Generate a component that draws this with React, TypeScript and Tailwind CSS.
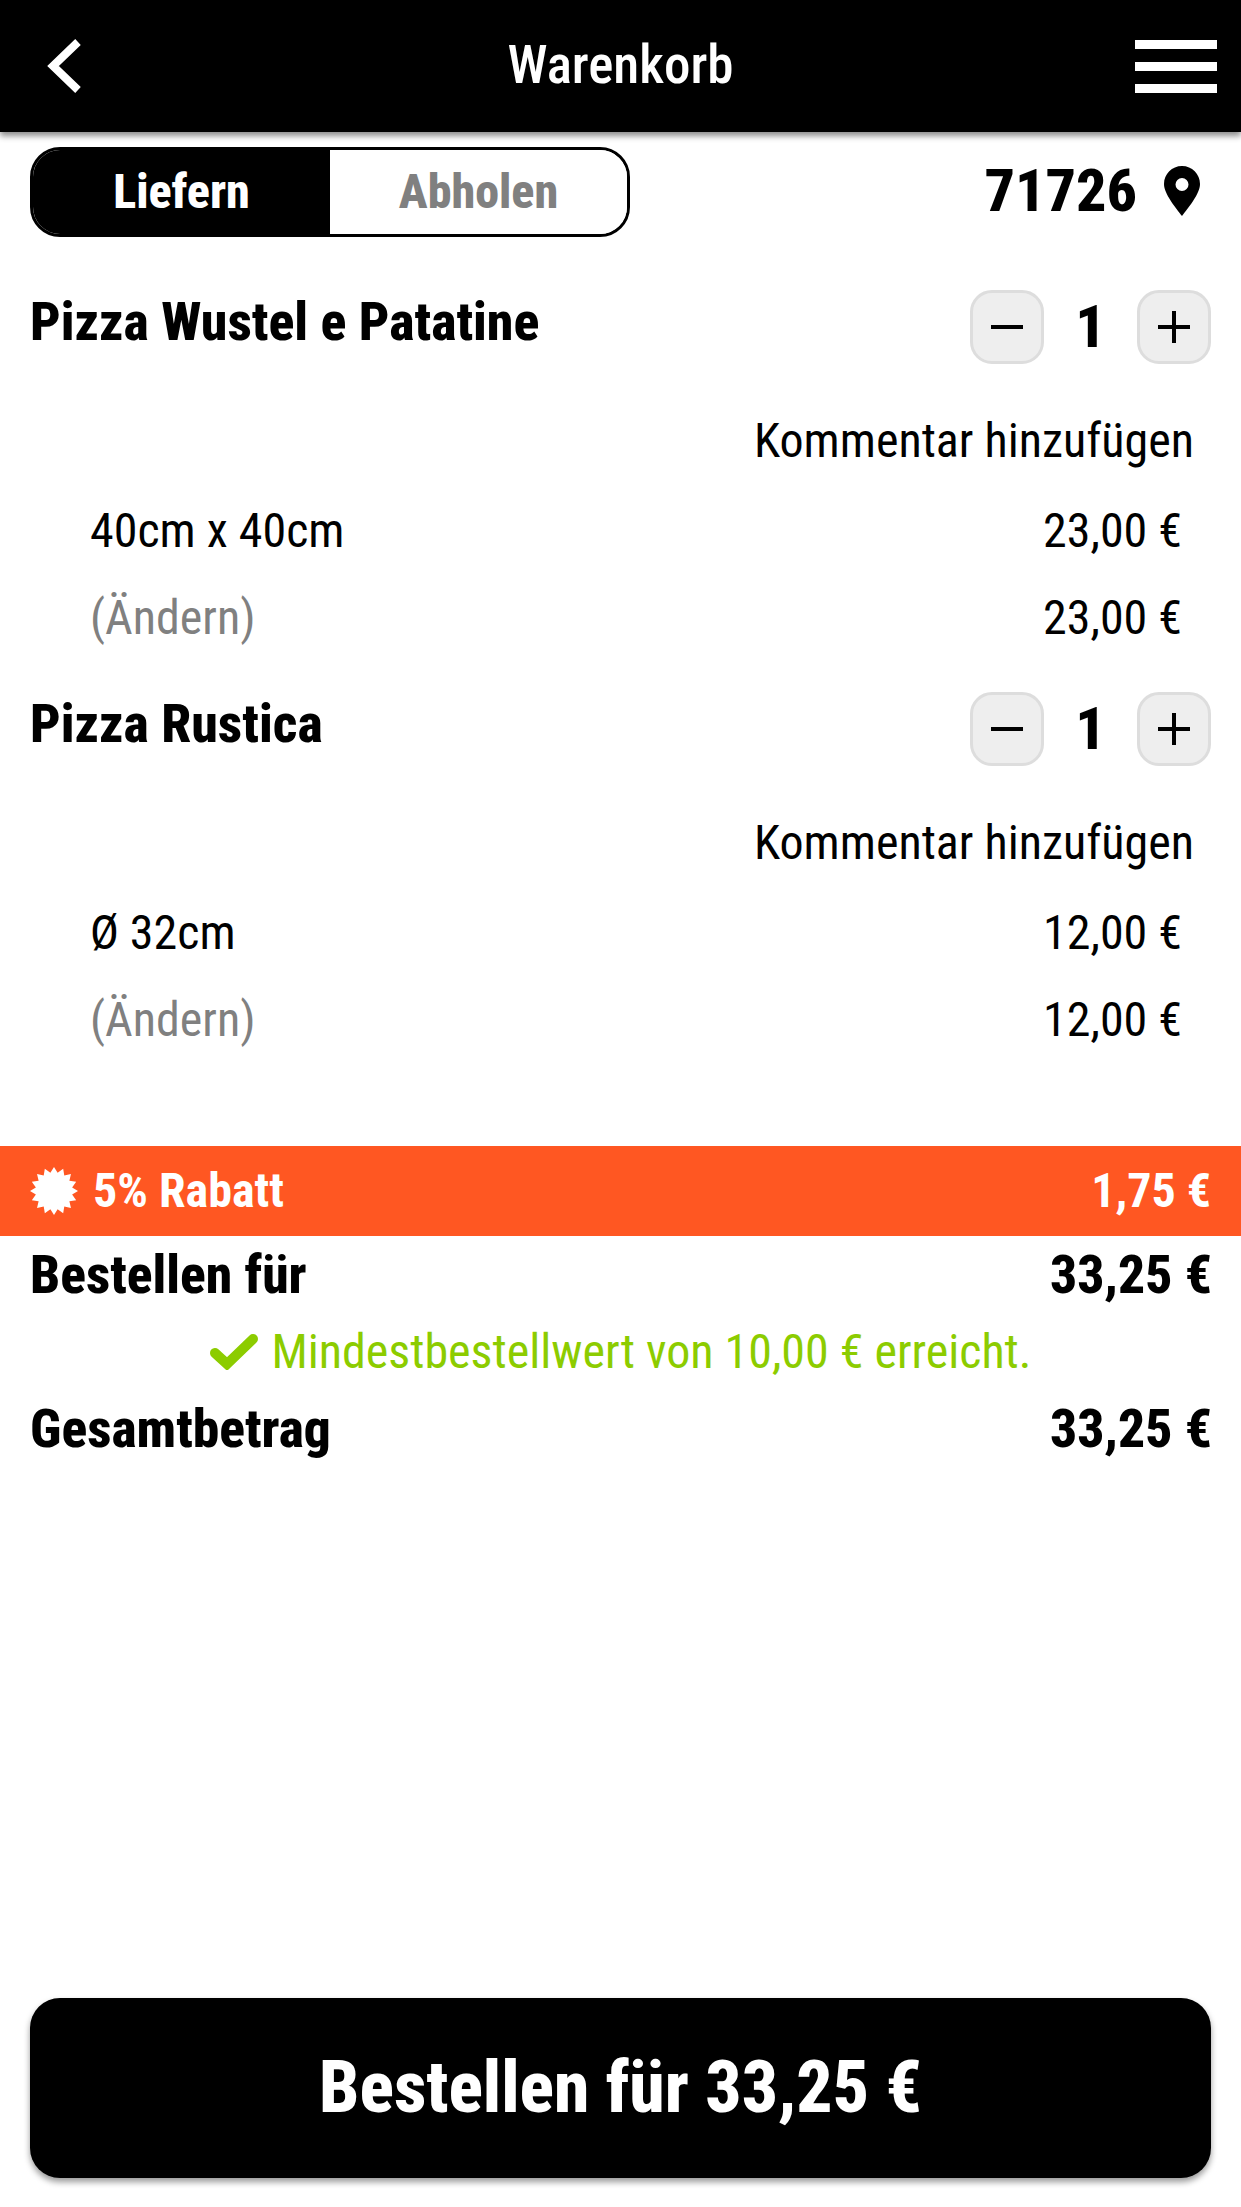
import React from "react";

const font = "font-['Roboto','Liberation_Sans',sans-serif] font-stretch-condensed";

const badgePoints = Array.from({ length: 32 }, (_, i) => {
  const r = i % 2 === 0 ? 24 : 18.5;
  const a = (i * Math.PI) / 16;
  return `${(r * Math.sin(a)).toFixed(2)},${(-r * Math.cos(a)).toFixed(2)}`;
}).join(" ");

function Stepper() {
  return (
    <div className="flex items-center gap-[21px]">
      <button className="w-[74px] h-[74px] rounded-[22px] bg-[#eeeeee] border-[3px] border-[#dddddd] flex items-center justify-center">
        <svg width="34" height="34" viewBox="0 0 34 34"><rect x="1" y="15" width="32" height="4" fill="#000" /></svg>
      </button>
      <span className="w-[51px] text-center text-[60px] font-extrabold leading-none text-black">1</span>
      <button className="w-[74px] h-[74px] rounded-[22px] bg-[#eeeeee] border-[3px] border-[#dddddd] flex items-center justify-center">
        <svg width="34" height="34" viewBox="0 0 34 34"><path d="M1 17h32M17 1v32" stroke="#000" strokeWidth="4" fill="none" /></svg>
      </button>
    </div>
  );
}

function Item({ name, size, price }: { name: string; size: string; price: string }) {
  return (
    <section className="px-[30px]">
      <div className="flex justify-between items-start h-[74px]">
        <h2 className="text-[53.8px] font-extrabold leading-[64px] text-black">{name}</h2>
        <Stepper />
      </div>
      <div className="flex justify-end pr-[17px] h-[107px] items-end text-[48px] leading-[60px] text-black">Kommentar hinzufügen</div>
      <div className="flex justify-between pl-[60px] pr-[29px] h-[90px] items-end text-[48px] leading-[60px] text-black">
        <span>{size}</span><span>{price}</span>
      </div>
      <div className="flex justify-between pl-[60px] pr-[29px] h-[87px] items-end text-[48px] leading-[60px] text-black">
        <span className="text-[#808080]">(Ändern)</span><span>{price}</span>
      </div>
    </section>
  );
}

export default function App() {
  return (
    <div className={`${font} relative w-[1241px] h-[2207px] bg-white flex flex-col overflow-hidden`}>
      <header className="h-[132px] shrink-0 bg-black shadow-[0_4px_6px_rgba(0,0,0,0.45)] grid grid-cols-[1fr_auto_1fr] items-center px-[24px] text-white">
        <svg className="ml-[22px]" width="36" height="54" viewBox="0 0 36 54"><path d="M32 3 7 27l25 24" stroke="#fff" strokeWidth="8" fill="none" /></svg>
        <h1 className="text-[53px] font-medium leading-none mb-[2px]">Warenkorb</h1>
        <div className="justify-self-end w-[82px] flex flex-col gap-[13px]">
          <div className="h-[9px] bg-white" /><div className="h-[9px] bg-white" /><div className="h-[9px] bg-white" />
        </div>
      </header>

      <div className="flex items-center justify-between pl-[30px] pr-[41px] mt-[15px] h-[90px]">
        <div className="flex w-[600px] h-[90px] rounded-[30px] border-[3px] border-black overflow-hidden text-[48px] font-extrabold">
          <div className="w-[297px] bg-black text-white flex items-center justify-center">Liefern</div>
          <div className="flex-1 bg-white text-[#808080] flex items-center justify-center">Abholen</div>
        </div>
        <div className="flex items-center gap-[27px] mb-[3px]">
          <span className="text-[60px] font-extrabold leading-none text-black">71726</span>
          <svg width="36" height="50" viewBox="0 0 36 50"><path fillRule="evenodd" d="M18 0C8 0 0 8 0 18c0 10 12 24 18 32 6-8 18-22 18-32C36 8 28 0 18 0Zm0 12a6.500 6.500 0 1 1 0 13 6.500 6.500 0 0 1 0-13Z" fill="#000" /></svg>
        </div>
      </div>

      <div className="mt-[53px] flex flex-col gap-[44px]">
        <Item name="Pizza Wustel e Patatine" size="40cm x 40cm" price="23,00 €" />
        <Item name="Pizza Rustica" size="Ø 32cm" price="12,00 €" />
      </div>

      <div className="mt-[96px] h-[90px] bg-[#ff5722] text-white flex items-center justify-between px-[30px] text-[48px] font-bold">
        <div className="flex items-center gap-[15px]">
          <svg width="48" height="48" viewBox="-24 -24 48 48">
            <polygon fill="#fff" points={badgePoints} />
          </svg>
          <span>5% Rabatt</span>
        </div>
        <span>1,75 €</span>
      </div>

      <div className="pl-[30px] pr-[29px] flex justify-between h-[78px] items-center text-[53.5px] font-extrabold text-black"><span>Bestellen für</span><span>33,25 €</span></div>
      <div className="flex justify-center items-center gap-[14px] h-[76px] text-[48px] text-[#8ccc00]">
        <svg width="48" height="36" viewBox="0 0 48 36"><path d="M5 19 17 30 43 5" stroke="#8ccc00" strokeWidth="10" fill="none" strokeLinecap="round" /></svg>
        <span>Mindestbestellwert von 10,00 € erreicht.</span>
      </div>
      <div className="pl-[30px] pr-[29px] flex justify-between h-[78px] items-center text-[53.5px] font-extrabold text-black"><span>Gesamtbetrag</span><span>33,25 €</span></div>

      <div className="flex-1" />
      <button className="mx-[30px] mb-[29px] h-[180px] rounded-[30px] bg-black text-white text-[71.5px] font-extrabold shadow-[0_4px_6px_rgba(0,0,0,0.4)]">Bestellen für 33,25 €</button>
    </div>
  );
}
